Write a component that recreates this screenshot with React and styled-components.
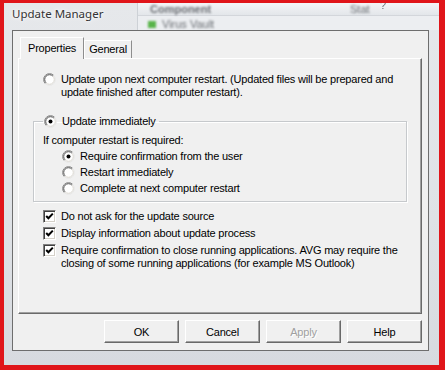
import React from "react";
import styled, { createGlobalStyle } from "styled-components";

const GlobalStyle = createGlobalStyle`
  html, body {
    margin: 0;
    padding: 0;
    background: #e4e6e9;
  }
  * {
    box-sizing: border-box;
  }
`;

const Frame = styled.div`
  width: 445px;
  height: 370px;
  display: flex;
  flex-direction: column;
  border-style: solid;
  border-color: #e0151a;
  border-width: 3px 6px 5px 4px;
  background: linear-gradient(180deg, #e6e8eb 0%, #dfe2e6 60%, #d7dadf 100%);
  overflow: hidden;
`;

const TitleBar = styled.div`
  height: 27px;
  display: flex;
  flex-shrink: 0;
`;

const Title = styled.div`
  width: 133px;
  padding: 3px 0 0 8px;
  font-family: "Noto Sans", "Liberation Sans", sans-serif;
  font-size: 11.5px;
  line-height: 16px;
  color: #333333;
  text-shadow: 0 0 6px #ffffff, 0 0 3px #ffffff;
`;

const Ghost = styled.div`
  flex: 1;
  display: flex;
  flex-direction: column;
  background: #eceef1;
  border-left: 1px solid #cdd1d6;
  font-family: "Liberation Sans", Arial, sans-serif;
  font-size: 11px;
  color: #6a6e73;
`;

const GhostHead = styled.div`
  height: 17px;
  display: flex;
  align-items: center;
  padding-left: 12px;
  background: linear-gradient(180deg, #f4f5f7, #e3e6ea);
  border-bottom: 1px solid #d3d6db;
`;

const GhostText = styled.span`
  filter: blur(1.3px);
  font-weight: ${(p) => (p.$bold ? 700 : 400)};
  width: ${(p) => p.$w}px;
`;

const GhostHelp = styled.span`
  margin-top: -8px;
  font-size: 11px;
  color: #6a6e74;
  filter: blur(0.4px);
`;

const GhostRow = styled.div`
  display: flex;
  align-items: center;
  gap: 6px;
  padding: 2px 0 0 10px;
`;

const GhostIcon = styled.span`
  width: 8px;
  height: 7px;
  background: #58b44a;
  filter: blur(0.8px);
`;

const Dialog = styled.div`
  margin: 0 10px 0 8px;
  height: 321px;
  flex-shrink: 0;
  display: flex;
  flex-direction: column;
  padding: 6px 6px 7px 5px;
  background: #f0f0f0;
  border: 1px solid #6e6e6e;
  font-family: "Liberation Sans", Arial, sans-serif;
  font-size: 11px;
  letter-spacing: -0.2px;
  color: #000;
`;

const TabStrip = styled.div`
  height: 21px;
  display: flex;
  align-items: flex-end;
  margin-left: 2px;
  position: relative;
  z-index: 1;
`;

const Tab = styled.div`
  height: ${(p) => (p.$active ? 22 : 18)}px;
  margin-bottom: ${(p) => (p.$active ? -1 : 0)}px;
  padding: ${(p) => (p.$active ? "0 7px" : "0 4px")};
  display: flex;
  align-items: center;
  background: #f0f0f0;
  border-top: 1px solid #ffffff;
  border-left: 1px solid #ffffff;
  border-right: 1px solid #8e8e8e;
  line-height: 13px;
`;

const Panel = styled.div`
  width: 404px;
  height: 256px;
  padding: 14px 14px 0;
  border-top: 1px solid #ffffff;
  border-left: 1px solid #ffffff;
  border-right: 1px solid #6a6a6a;
  border-bottom: 1px solid #6a6a6a;
  box-shadow: inset -1px -1px 0 #a0a0a0;
  display: flex;
  flex-direction: column;
`;

const Option = styled.label`
  display: flex;
  align-items: ${(p) => (p.$top ? "flex-start" : "center")};
  gap: 5px;
  min-height: ${(p) => p.$h || 13}px;
  margin-left: ${(p) => p.$indent || 0}px;
  line-height: 13px;
  white-space: nowrap;
`;

const Lines = styled.span`
  display: block;
`;

const Group = styled.fieldset`
  margin: 16px 0 0;
  padding: 4px 0 5px 9px;
  border: 1px solid #c6c9cc;
  box-shadow: 1px 1px 0 #ffffff, inset 1px 1px 0 #ffffff;
  min-width: 0;
`;

const Legend = styled.legend`
  padding: 0 3px 0 1px;
  line-height: 13px;
`;

const GroupNote = styled.div`
  height: 16px;
  display: flex;
  align-items: center;
`;

const Checks = styled.div`
  display: flex;
  flex-direction: column;
  gap: 4px;
  margin-top: 8px;
  padding-left: 10px;
`;

const First = styled.div`
  padding-left: 10px;
`;

const BoxMark = styled.span`
  width: 13px;
  height: 13px;
  flex-shrink: 0;
  display: flex;
  align-items: center;
  justify-content: center;
  background: #ffffff;
  border-top: 1px solid #808080;
  border-left: 1px solid #808080;
  border-right: 1px solid #ffffff;
  border-bottom: 1px solid #ffffff;
  box-shadow: inset 1px 1px 0 #404040, inset -1px -1px 0 #d4d0c8;
`;

const RoundMark = styled.svg`
  flex-shrink: 0;
  display: block;
`;

const ButtonRow = styled.div`
  display: flex;
  justify-content: flex-end;
  gap: 6px;
  margin-top: 6px;
`;

const Button = styled.button`
  width: 75px;
  height: 23px;
  padding: 0;
  font-family: "Liberation Sans", Arial, sans-serif;
  font-size: 11px;
  letter-spacing: -0.2px;
  color: ${(p) => (p.disabled ? "#a0a0a0" : "#000")};
  text-shadow: ${(p) => (p.disabled ? "1px 1px 0 #ffffff" : "none")};
  background: #f0f0f0;
  border-top: 1px solid #ffffff;
  border-left: 1px solid #ffffff;
  border-right: 1px solid #696969;
  border-bottom: 1px solid #696969;
  box-shadow: inset -1px -1px 0 #a0a0a0;
  border-radius: 0;
`;

const Radio = ({ checked }) => (
  <RoundMark width="13" height="13" viewBox="0 0 13 13">
    <circle cx="6.5" cy="6.5" r="5.6" fill="#ffffff" />
    <path d="M10.7 2.3 A5.94 5.94 0 0 0 2.3 10.7" stroke="#8a8a8a" fill="none" />
    <path d="M9.9 3.1 A4.8 4.8 0 0 0 3.1 9.9" stroke="#404040" fill="none" strokeWidth="0.9" />
    <path d="M10.7 2.3 A5.94 5.94 0 0 1 2.3 10.7" stroke="#e8e8e8" fill="none" />
    <path d="M9.9 3.1 A4.8 4.8 0 0 1 3.1 9.9" stroke="#d4d0c8" fill="none" strokeWidth="0.9" />
    {checked && <circle cx="6.5" cy="6.5" r="2" fill="#000" />}
  </RoundMark>
);

const Check = () => (
  <BoxMark>
    <svg width="9" height="9" viewBox="0 0 9 9">
      <polyline points="1.2,4 3.4,6.3 7.8,1.6" stroke="#000" strokeWidth="2" fill="none" />
    </svg>
  </BoxMark>
);

const App = () => {
  return (
    <>
      <GlobalStyle />
      <Frame>
        <TitleBar>
          <Title>Update Manager</Title>
          <Ghost>
            <GhostHead>
              <GhostText $bold $w={200}>Component</GhostText>
              <GhostText $w={30}>Stat</GhostText>
              <GhostHelp>?</GhostHelp>
            </GhostHead>
            <GhostRow>
              <GhostIcon />
              <GhostText $w={120}>Virus Vault</GhostText>
            </GhostRow>
          </Ghost>
        </TitleBar>
        <Dialog>
          <TabStrip>
            <Tab $active>Properties</Tab>
            <Tab>General</Tab>
          </TabStrip>
          <Panel>
            <First>
              <Option $top>
                <Radio />
                <Lines>
                  Update upon next computer restart. (Updated files will be prepared and
                  <br />
                  update finished after computer restart).
                </Lines>
              </Option>
            </First>
            <Group>
              <Legend>
                <Option>
                  <Radio checked />
                  Update immediately
                </Option>
              </Legend>
              <GroupNote>If computer restart is required:</GroupNote>
              <Option $h={16} $indent={19}>
                <Radio checked />
                Require confirmation from the user
              </Option>
              <Option $h={16} $indent={19}>
                <Radio />
                Restart immediately
              </Option>
              <Option $h={16} $indent={19}>
                <Radio />
                Complete at next computer restart
              </Option>
            </Group>
            <Checks>
              <Option>
                <Check />
                Do not ask for the update source
              </Option>
              <Option>
                <Check />
                Display information about update process
              </Option>
              <Option $top>
                <Check />
                <Lines>
                  Require confirmation to close running applications. AVG may require the
                  <br />
                  closing of some running applications (for example MS Outlook)
                </Lines>
              </Option>
            </Checks>
          </Panel>
          <ButtonRow>
            <Button>OK</Button>
            <Button>Cancel</Button>
            <Button disabled>Apply</Button>
            <Button>Help</Button>
          </ButtonRow>
        </Dialog>
      </Frame>
    </>
  );
};

export default App;
